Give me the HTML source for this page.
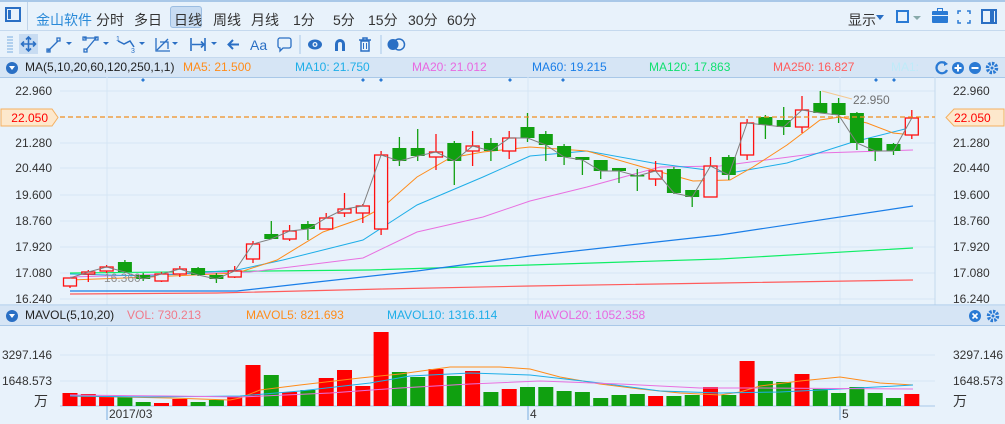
<!DOCTYPE html>
<html><head><meta charset="utf-8">
<style>
*{margin:0;padding:0;box-sizing:border-box}
body{width:1005px;height:424px;overflow:hidden;background:#e8f2fb;font-family:"Liberation Sans","Noto Sans CJK SC",sans-serif;position:relative}
.abs{position:absolute}
#tb1{left:0;top:0;width:1005px;height:31px;background:#e8f2fb;border-top:2px solid #a9c8e8;border-bottom:1px solid #c5d9ee}
#tb1 span{position:absolute;top:8px;font-size:14px;color:#333}
#tb2{left:0;top:31px;width:1005px;height:27px;border-bottom:1px solid #c5d9ee}
.hdr{left:0;width:1005px;height:20px;background:#d6e5f5;border-bottom:1px solid #a9c8e8;font-size:12px;line-height:19px}
.hdr span{position:absolute;top:0}
</style></head><body>
<div id="tb1" class="abs">
 <div class="abs" style="left:5px;top:5px;width:16px;height:15px;border:2px solid #2a6fc4"></div>
 <div class="abs" style="left:8px;top:8px;width:3px;height:9px;background:#2a6fc4"></div>
 <div class="abs" style="left:27px;top:0;width:1px;height:28px;background:#c0d4ea"></div>
 <span style="left:36px;color:#2a8ad8">金山软件</span>
 <span style="left:96px">分时</span>
 <span style="left:134px">多日</span>
 <div class="abs" style="left:170px;top:4px;width:32px;height:22px;background:#c8dcf2;border:1px solid #9bbde2;border-radius:3px"></div>
 <span style="left:174px">日线</span>
 <span style="left:213px">周线</span>
 <span style="left:251px">月线</span>
 <span style="left:293px">1分</span>
 <span style="left:333px">5分</span>
 <span style="left:368px">15分</span>
 <span style="left:408px">30分</span>
 <span style="left:447px">60分</span>
 <span style="left:848px">显示</span>
 <div class="abs" style="left:876px;top:13px;border:4px solid transparent;border-top:5px solid #2a6fc4"></div>
 <div class="abs" style="left:896px;top:8px;width:13px;height:13px;border:2px solid #2a7ad4"></div>
 <div class="abs" style="left:913px;top:14px;border:4px solid transparent;border-top:4px solid #8aa"></div>
 <div class="abs" style="left:932px;top:9px;width:16px;height:12px;background:#2a7ad4;border-radius:1px"></div>
 <div class="abs" style="left:937px;top:6px;width:6px;height:4px;border:1.5px solid #2a7ad4;border-bottom:none"></div>
 <div class="abs" style="left:932px;top:13px;width:16px;height:1px;background:#e8f2fb"></div>
 <svg class="abs" style="left:957px;top:8px" width="14" height="14"><path d="M1 4V1H4M10 1H13V4M13 10V13H10M4 13H1V10" fill="none" stroke="#2a7ad4" stroke-width="1.5"/></svg>
 <div class="abs" style="left:981px;top:7px;width:16px;height:15px;border:2px solid #2a6fc4"></div>
 <div class="abs" style="left:990px;top:9px;width:4px;height:11px;background:#2a6fc4"></div>
</div>
<div id="tb2" class="abs">
 <svg class="abs" style="left:0;top:0" width="420" height="27">
  <g stroke="#7aaee0"><line x1="7" y1="6" x2="13" y2="6"/><line x1="7" y1="9" x2="13" y2="9"/><line x1="7" y1="12" x2="13" y2="12"/><line x1="7" y1="15" x2="13" y2="15"/><line x1="7" y1="18" x2="13" y2="18"/><line x1="7" y1="21" x2="13" y2="21"/></g>
  <rect x="19" y="3" width="19" height="20" fill="#c8dcf2"/>
  <path d="M28.5 6V20M21.5 13H35.5M26 8.5L28.5 6 31 8.5M26 17.5L28.5 20 31 17.5M24 10.5L21.5 13 24 15.5M33 10.5L35.5 13 33 15.5" fill="none" stroke="#2a6fc4" stroke-width="1.6"/>
  <path d="M48 20L58 10M47 18h3v3h-3zM57 7h3v3h-3z" fill="none" stroke="#2a6fc4" stroke-width="1.3"/><path d="M66 11h6l-3 3z" fill="#2a6fc4"/>
  <path d="M84 7h12L86 19M83 6h3v3h-3zM95 6h3v3h-3zM84 18h3v3h-3z" fill="none" stroke="#2a6fc4" stroke-width="1.3"/><path d="M103 11h6l-3 3z" fill="#2a6fc4"/>
  <path d="M118 10l6 3 6-3 4 6" fill="none" stroke="#2a6fc4" stroke-width="1.5"/><text x="116" y="10" font-size="7" fill="#2a6fc4">1</text><text x="131" y="22" font-size="7" fill="#2a6fc4">3</text><path d="M139 11h6l-3 3z" fill="#2a6fc4"/>
  <path d="M156 7v13h14M157 19l11-11M160 11h8v7" fill="none" stroke="#2a6fc4" stroke-width="1.3"/><path d="M172 11h6l-3 3z" fill="#2a6fc4"/>
  <path d="M191 7v13M205 7v13M192 13.5h12M201 10.5l3 3-3 3" fill="none" stroke="#2a6fc4" stroke-width="1.6"/><path d="M211 11h6l-3 3z" fill="#2a6fc4"/>
  <path d="M239 13.5h-10M233 9l-4.5 4.5 4.5 4.5" fill="none" stroke="#2a6fc4" stroke-width="2"/>
  <text x="250" y="19" font-size="14" fill="#2a6fc4" font-family="Liberation Sans">Aa</text>
  <path d="M279 7h10a2 2 0 0 1 2 2v6a2 2 0 0 1-2 2h-6l-3 3v-3a2 2 0 0 1-2-2V9a2 2 0 0 1 2-2z" fill="none" stroke="#2a6fc4" stroke-width="1.3"/>
  <line x1="300" y1="4" x2="300" y2="23" stroke="#a9c8e8"/>
  <ellipse cx="315" cy="13.5" rx="7" ry="5" fill="#2a6fc4"/><circle cx="315" cy="13.5" r="2.5" fill="#e8f2fb"/><circle cx="315" cy="13.5" r="1.2" fill="#2a6fc4"/>
  <path d="M335 20v-7a5 5 0 0 1 10 0v7h-3v-7a2 2 0 0 0-4 0v7z" fill="#2a6fc4"/>
  <path d="M359 9h12M363 9V7h4v2M361 10h8v10h-8z" fill="none" stroke="#2a6fc4" stroke-width="1.5"/><path d="M363.5 12v6M366.5 12v6" stroke="#2a6fc4"/>
  <line x1="381" y1="4" x2="381" y2="23" stroke="#a9c8e8"/>
  <circle cx="393" cy="13.5" r="5.5" fill="#2a6fc4"/><circle cx="399" cy="13.5" r="5.5" fill="none" stroke="#2a6fc4" stroke-width="1.5"/>
 </svg>
</div>
<div class="hdr abs" style="top:58px">
 <div class="abs" style="left:6px;top:4px;width:12px;height:12px;border-radius:6px;background:#2a6fc4"></div>
 <div class="abs" style="left:9px;top:8px;border:3px solid transparent;border-top:4px solid #fff"></div>
 <span style="left:25px;color:#222">MA(5,10,20,60,120,250,1,1)</span>
 <span style="left:183px;color:#ff8c1a">MA5: 21.500</span>
 <span style="left:295px;color:#1eaee8">MA10: 21.750</span>
 <span style="left:412px;color:#e868e0">MA20: 21.012</span>
 <span style="left:532px;color:#1a7ee8">MA60: 19.215</span>
 <span style="left:649px;color:#10e070">MA120: 17.863</span>
 <span style="left:773px;color:#ff5c5c">MA250: 16.827</span>
 <span style="left:891px;color:#bfeaf8">MA1:</span>
 <svg class="abs" style="left:934px;top:2px" width="70" height="16"><path d="M12 4A5.5 5.5 0 1 0 13 10" fill="none" stroke="#2a7ad4" stroke-width="2.2"/><path d="M10 1l4 3-4 2z" fill="#2a7ad4"/><circle cx="24" cy="8" r="6" fill="#2a7ad4"/><path d="M20.5 8h7M24 4.5v7" stroke="#fff" stroke-width="2"/><circle cx="41" cy="8" r="6" fill="#2a7ad4"/><path d="M37.5 8h7" stroke="#fff" stroke-width="2"/><circle cx="58" cy="8" r="4.5" fill="none" stroke="#2a7ad4" stroke-width="3.5" stroke-dasharray="2.3 1.2"/><circle cx="58" cy="8" r="1.5" fill="#2a7ad4"/></svg>
</div>
<div class="hdr abs" style="top:306px">
 <div class="abs" style="left:6px;top:4px;width:12px;height:12px;border-radius:6px;background:#2a6fc4"></div>
 <div class="abs" style="left:9px;top:8px;border:3px solid transparent;border-top:4px solid #fff"></div>
 <span style="left:25px;color:#222">MAVOL(5,10,20)</span>
 <span style="left:127px;color:#f07a8a">VOL: 730.213</span>
 <span style="left:246px;color:#ff8c1a">MAVOL5: 821.693</span>
 <span style="left:387px;color:#1eaee8">MAVOL10: 1316.114</span>
 <span style="left:534px;color:#e868e0">MAVOL20: 1052.358</span>
 <svg class="abs" style="left:968px;top:2px" width="36" height="16"><circle cx="7" cy="8" r="6" fill="#2a7ad4"/><path d="M4.5 5.5l5 5M9.5 5.5l-5 5" stroke="#fff" stroke-width="1.6"/><circle cx="25" cy="8" r="4.5" fill="none" stroke="#2a7ad4" stroke-width="3.5" stroke-dasharray="2.3 1.2"/><circle cx="25" cy="8" r="1.5" fill="#2a7ad4"/></svg>
</div>
<svg id="ch" class="abs" style="left:0;top:0" width="1005" height="424"></svg>
<script>
var s='';
function L(x1,y1,x2,y2,c,w,d){s+='<line x1="'+x1+'" y1="'+y1+'" x2="'+x2+'" y2="'+y2+'" stroke="'+c+'" stroke-width="'+(w||1)+'"'+(d?' stroke-dasharray="'+d+'"':'')+'/>';}
function T(x,y,t,c,sz,a){s+='<text x="'+x+'" y="'+y+'" fill="'+(c||'#333')+'" font-size="'+(sz||12)+'" font-family="Liberation Sans,Noto Sans CJK SC,sans-serif"'+(a?' text-anchor="'+a+'"':'')+'>'+t+'</text>';}
function P(pts,c,w){s+='<polyline points="'+pts+'" fill="none" stroke="'+c+'" stroke-width="'+(w||1)+'"/>';}
var gy=[91,143,168,195,221,247,273,299],gl=['22.960','21.280','20.440','19.600','18.760','17.920','17.080','16.240'];
gy.forEach(function(y,i){L(60,y,935,y,'#d6e6f4');T(52,y+4,gl[i],'#333',12,'end');T(953,y+4,gl[i],'#333',12);});
[107,528,840].forEach(function(x){L(x,77,x,305,'#d6e6f4');L(x,327,x,405,'#d6e6f4');});
L(935,77,935,305,'#c5d9ee');L(0,305,1005,305,'#a9c8e8');
L(60,355,935,355,'#d6e6f4');L(60,381,935,381,'#d6e6f4');
T(52,359,'3297.146','#333',12,'end');T(52,385,'1648.573','#333',12,'end');T(953,359,'3297.146','#333',12);T(953,385,'1648.573','#333',12);
T(48,406,'万','#333',14,'end');T(953,406,'万','#333',14);
L(60,406,935,406,'#a9c8e8');
L(107,406,107,420,'#7aaee0');T(109,418,'2017/03','#333',12);
L(528,406,528,420,'#7aaee0');T(530,418,'4','#333',12);
L(840,406,840,420,'#7aaee0');T(842,418,'5','#333',12);
[143,363,381,510,563,876,894].forEach(function(x){s+='<path d="M'+x+' 78l2 2-2 2-2-2z" fill="#2a7ad4"/>';});
P('70,294 217,293 383,289 530,286 720,283 913,280','#ff5c5c',1.2);
P('70,273 370,270 530,265 720,259 913,248','#10ee66',1.2);
P('70,291 237,291 317,282 417,271 530,256 720,235 913,206','#1a7ee8',1.2);
P('70,277 250,272 363,258 417,232 483,217 530,201 587,187 660,167 720,166 820,153 913,150','#e870e0',1);
P('70,274 150,276 237,270 283,260 363,240 383,227 417,205 483,177 530,156 587,151 653,163 730,173 787,163 853,142 913,127','#1eaee8',1);
P('70,280 150,277 237,273 277,260 323,232 363,218 383,207 417,177 450,158 483,152 530,147 587,151 653,170 693,181 730,180 753,167 787,145 820,120 840,117 867,123 893,133 913,135','#ff8c1a',1);
var C=[[1,278,286,278,288],[1,272,274,270,282],[1,267,271,265,273],[0,262,272,260,273],[0,275,279,273,281],[1,274,281,272,282],[1,269,274,266,277],[0,268,275,267,276],[0,275,279,273,283],[1,271,277,266,278],
[1,244,259,241,263],[0,234,239,221,239],[1,231,239,225,241],[0,224,229,221,240],[1,218,229,213,229],[1,209,213,193,217],[1,206,213,204,223],[1,155,229,151,235],[0,148,161,137,166],[0,148,156,129,161],
[1,152,157,134,170],[0,143,161,141,185],[1,146,151,131,166],[0,143,151,138,161],[1,138,151,131,159],[0,127,138,113,142],[0,134,145,131,161],[0,146,157,144,165],[0,157,160,157,175],[0,160,171,160,179],
[0,168,171,168,183],[0,175,176,169,191],[1,171,179,161,186],[0,169,193,167,194],[0,190,197,190,207],[1,166,197,157,197],[0,157,175,155,180],[1,123,155,119,160],[0,117,125,115,139],[0,120,127,107,135],
[1,110,127,96,133],[0,103,113,91,113],[0,103,115,98,123],[0,113,143,112,150],[0,138,151,138,161],[0,144,151,143,155],[1,118,135,110,139]];
var cl=[];
C.forEach(function(c,i){var x=70+i*18.3,col=c[0]?'#ff1010':'#10a010';
 L(x,c[3],x,c[4],col,1.3);
 if(c[0])s+='<rect x="'+(x-6.5)+'" y="'+c[1]+'" width="13" height="'+Math.max(1,c[2]-c[1])+'" fill="#e8f2fb" stroke="'+col+'" stroke-width="1.3"/>';
 else s+='<rect x="'+(x-7)+'" y="'+c[1]+'" width="14" height="'+Math.max(1.5,c[2]-c[1])+'" fill="'+col+'"/>';
 cl.push(x.toFixed(1)+','+(c[0]?c[1]:c[2]));});
P(cl.join(' '),'#808080',1);
L(822,91,852,99,'#f5c890',1);T(853,104,'22.950','#707070',12);
T(104,282,'16.360','#909090',12);
L(60,117,935,117,'#f09020',1.3,'5 3');
s+='<path d="M1 109H52L58 117.5 52 126H1z" fill="#fde8cc" stroke="#f5b060"/>';T(48,122,'22.050','#ff0000',12,'end');
s+='<path d="M1004 109H954L946 117.5 954 126H1004z" fill="#fde8cc" stroke="#f5b060"/>';T(954,122,'22.050','#ff0000',12);
var V=[393,394,397,397,402,403,399,402,400,396,365,375,392,390,378,370,386,332,372,377,369,376,371,392,389,387,387,391,392,398,395,394,396,396,395,387,395,361,381,382,374,389,393,387,393,398,394];
V.forEach(function(v,i){var x=70+i*18.3;s+='<rect x="'+(x-7.5)+'" y="'+v+'" width="15" height="'+(406-v)+'" fill="'+(C[i][0]?'#ff0000':'#10a010')+'"/>';});
P('70,396 120,397 170,398 230,400 240,398 260,390 300,385 360,378 400,374 450,367 500,367 530,369 560,377 600,384 640,389 680,393 720,395 740,392 760,386 800,381 840,377 880,383 913,385','#ff8c1a',1);
P('70,396 150,397 240,396 300,391 370,383 410,376 470,373 530,375 600,383 660,391 720,393 780,392 840,389 913,385','#1eaee8',1);
P('70,395 170,396 240,397 330,393 400,388 470,384 540,381 620,384 700,388 760,388 913,389','#e870e0',1);
document.getElementById('ch').innerHTML=s;
</script>
</body></html>
